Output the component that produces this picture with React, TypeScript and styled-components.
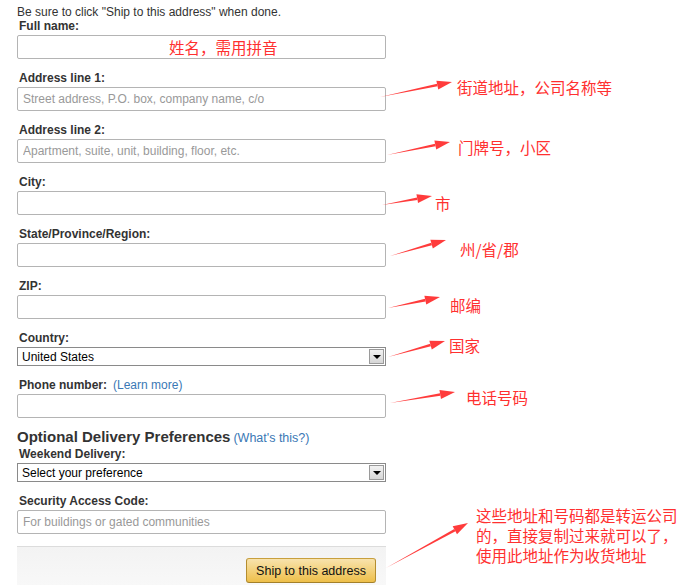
import React from 'react';
import styled, { createGlobalStyle } from 'styled-components';

const GlobalStyle = createGlobalStyle`
  html, body {
    margin: 0;
    padding: 0;
    background: #fff;
  }
  body {
    font-family: "Liberation Sans", Arial, sans-serif;
    font-size: 12px;
    color: #333;
  }
`;

const Page = styled.div`
  position: relative;
  width: 689px;
  height: 585px;
  overflow: hidden;
  background: #fff;
`;

const FormColumn = styled.form`
  width: 369px;
  padding: 5px 0 0 17px;
  display: flex;
  flex-direction: column;
`;

const Intro = styled.div`
  line-height: 14px;
  color: #333;
`;

const Field = styled.div<{ $first?: boolean }>`
  display: flex;
  flex-direction: column;
  gap: 2px;
  margin-top: ${({ $first }) => ($first ? '0' : '12px')};
`;

const Label = styled.label`
  font-weight: bold;
  line-height: 14px;
  padding-left: 2px;
  color: #333;
`;

const Link = styled.a`
  font-weight: normal;
  color: #3a78b5;
  text-decoration: none;
  margin-left: 6px;
`;

const TextInput = styled.input`
  box-sizing: border-box;
  width: 100%;
  height: 24px;
  border: 1px solid #b4b4b4;
  border-radius: 2px;
  padding: 0 5px;
  font-family: "Liberation Sans", Arial, sans-serif;
  font-size: 12px;
  color: #333;
  outline: none;

  &::placeholder {
    color: #999;
  }
`;

const SelectWrap = styled.div`
  box-sizing: border-box;
  height: 19px;
  border: 1px solid #8a8a8a;
  display: flex;
  align-items: stretch;
  background: #fff;
`;

const NativeSelect = styled.select`
  flex: 1;
  appearance: none;
  border: none;
  background: transparent;
  padding: 0 4px;
  font-family: "Liberation Sans", Arial, sans-serif;
  font-size: 12px;
  color: #000;
  outline: none;
`;

const ArrowBox = styled.div`
  width: 15px;
  margin: 1px;
  box-sizing: border-box;
  border: 1px solid #9a9a9a;
  background: linear-gradient(#f2f2f2, #d6d6d6);
  display: flex;
  align-items: center;
  justify-content: center;

  &::after {
    content: '';
    border-left: 4px solid transparent;
    border-right: 4px solid transparent;
    border-top: 4px solid #000;
    margin-top: 1px;
  }
`;

const SectionTitle = styled.div`
  margin-top: 10px;
  font-size: 15px;
  font-weight: bold;
  line-height: 17px;
  color: #333;

  a {
    font-size: 12.5px;
    margin-left: 3px;
  }
`;

const ButtonBar = styled.div`
  margin-top: 12px;
  height: 40px;
  border-top: 1px solid #dcdcdc;
  background: linear-gradient(#f3f3f3, #f8f8f8);
  display: flex;
  justify-content: flex-end;
  align-items: flex-start;
  padding: 11px 10px 0 0;
  box-sizing: border-box;
`;

const ShipButton = styled.button`
  width: 130px;
  height: 25px;
  border: 1px solid;
  border-color: #c8a03e #b48d2f #a3802a;
  border-radius: 3px;
  background: linear-gradient(#f8e3ad, #eebf4a);
  font-family: "Liberation Sans", Arial, sans-serif;
  font-size: 12.5px;
  color: #111;
  cursor: pointer;
`;

const Note = styled.span<{ $x: number; $y: number }>`
  position: absolute;
  left: ${({ $x }) => $x}px;
  top: ${({ $y }) => $y}px;
  font-family: "Noto Sans CJK SC", sans-serif;
  font-size: 15.5px;
  line-height: 20px;
  color: #ff3030;
  white-space: nowrap;
  pointer-events: none;
`;

const ArrowLayer = styled.svg`
  position: absolute;
  left: 0;
  top: 0;
  pointer-events: none;
`;

type Arrow = { x1: number; y1: number; x2: number; y2: number };

const arrows: Arrow[] = [
  { x1: 380, y1: 97, x2: 452, y2: 82 },
  { x1: 387, y1: 155, x2: 450, y2: 142 },
  { x1: 382, y1: 205, x2: 432, y2: 196 },
  { x1: 390, y1: 256, x2: 446, y2: 240 },
  { x1: 388, y1: 308, x2: 440, y2: 297 },
  { x1: 388, y1: 357, x2: 445, y2: 341 },
  { x1: 390, y1: 403, x2: 455, y2: 392 },
  { x1: 386, y1: 568, x2: 468, y2: 523 },
];

// arrowhead as a filled triangle at the tip, shaft thins toward the tail
const ArrowShape: React.FC<Arrow> = ({ x1, y1, x2, y2 }) => {
  const dx = x2 - x1;
  const dy = y2 - y1;
  const len = Math.hypot(dx, dy);
  const ux = dx / len;
  const uy = dy / len;
  const px = -uy;
  const py = ux;
  const headLen = 15;
  const headW = 4.5;
  const bx = x2 - ux * headLen;
  const by = y2 - uy * headLen;
  const shaft = [
    `${x1},${y1}`,
    `${bx + px * 1.3},${by + py * 1.3}`,
    `${bx - px * 1.3},${by - py * 1.3}`,
  ].join(' ');
  const head = [
    `${x2},${y2}`,
    `${bx + px * headW},${by + py * headW}`,
    `${bx - px * headW},${by - py * headW}`,
  ].join(' ');
  return (
    <g fill="#ff3b3b">
      <polygon points={shaft} />
      <polygon points={head} />
    </g>
  );
};

const App: React.FC = () => {
  return (
    <Page>
      <GlobalStyle />
      <FormColumn onSubmit={e => e.preventDefault()}>
        <Intro>Be sure to click "Ship to this address" when done.</Intro>

        <Field $first>
          <Label>Full name:</Label>
          <TextInput />
        </Field>

        <Field>
          <Label>Address line 1:</Label>
          <TextInput placeholder="Street address, P.O. box, company name, c/o" />
        </Field>

        <Field>
          <Label>Address line 2:</Label>
          <TextInput placeholder="Apartment, suite, unit, building, floor, etc." />
        </Field>

        <Field>
          <Label>City:</Label>
          <TextInput />
        </Field>

        <Field>
          <Label>State/Province/Region:</Label>
          <TextInput />
        </Field>

        <Field>
          <Label>ZIP:</Label>
          <TextInput />
        </Field>

        <Field>
          <Label>Country:</Label>
          <SelectWrap>
            <NativeSelect defaultValue="US">
              <option value="US">United States</option>
            </NativeSelect>
            <ArrowBox />
          </SelectWrap>
        </Field>

        <Field>
          <Label>
            Phone number:
            <Link href="#">(Learn more)</Link>
          </Label>
          <TextInput />
        </Field>

        <SectionTitle>
          Optional Delivery Preferences
          <Link href="#">(What's this?)</Link>
        </SectionTitle>

        <Field $first>
          <Label>Weekend Delivery:</Label>
          <SelectWrap>
            <NativeSelect defaultValue="">
              <option value="">Select your preference</option>
            </NativeSelect>
            <ArrowBox />
          </SelectWrap>
        </Field>

        <Field>
          <Label>Security Access Code:</Label>
          <TextInput placeholder="For buildings or gated communities" />
        </Field>

        <ButtonBar>
          <ShipButton type="submit">Ship to this address</ShipButton>
        </ButtonBar>
      </FormColumn>

      <ArrowLayer width={689} height={585}>
        {arrows.map((a, i) => (
          <ArrowShape key={i} {...a} />
        ))}
      </ArrowLayer>

      <Note $x={169} $y={37}>姓名，需用拼音</Note>
      <Note $x={457} $y={77}>街道地址，公司名称等</Note>
      <Note $x={458} $y={137}>门牌号，小区</Note>
      <Note $x={435} $y={193}>市</Note>
      <Note $x={460} $y={239}>州/省/郡</Note>
      <Note $x={450} $y={295}>邮编</Note>
      <Note $x={449} $y={335}>国家</Note>
      <Note $x={466} $y={387}>电话号码</Note>
      <Note $x={476} $y={505}>
        这些地址和号码都是转运公司
        <br />
        的，直接复制过来就可以了，
        <br />
        使用此地址作为收货地址
      </Note>
    </Page>
  );
};

export default App;
